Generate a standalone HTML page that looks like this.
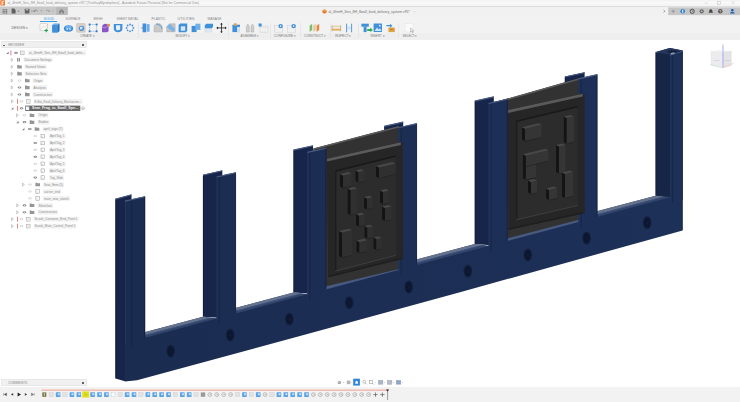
<!DOCTYPE html>
<html>
<head>
<meta charset="utf-8">
<title>Fusion</title>
<style>
html,body{margin:0;padding:0;}
body{width:740px;height:402px;overflow:hidden;background:#fff;position:relative;font-family:"Liberation Sans",sans-serif;}
.abs{position:absolute;}
.t{position:absolute;white-space:nowrap;font-size:3.3px;line-height:4px;color:#6a6a6a;letter-spacing:0;}
#titlebar{left:0;top:0;width:740px;height:5.8px;background:linear-gradient(#f3f3f3 0,#f3f3f3 20%,#fbfbfb 35%,#f6f6f6 60%,#f4f4f4 100%);}
#row2{left:0;top:5.5px;width:740px;height:10px;background:#f1f1f1;border-top:1.3px solid #dddddd;box-sizing:border-box;}
#qat{left:0;top:7px;width:67.5px;height:8px;background:#c9c9c9;}
#ribbon{left:0;top:15.5px;width:740px;height:24.4px;background:linear-gradient(#f2f2f2 0,#f2f2f2 69%,#eeeeee 70%,#efefef 100%);}
#canvas{left:0;top:40px;width:740px;height:362px;}
</style>
</head>
<body>
<div id="titlebar" class="abs"></div>
<div id="row2" class="abs"></div>
<div id="qat" class="abs"></div>
<div id="ribbon" class="abs"></div>

<!-- MODEL -->
<svg id="canvas" class="abs" viewBox="0 40 740 362">
<!--MODEL-START-->
<defs><linearGradient id="gbar" gradientUnits="userSpaceOnUse" x1="115" y1="0" x2="683" y2="0"><stop offset="0" stop-color="#1b2c51"/><stop offset="1" stop-color="#1d3057"/></linearGradient><linearGradient id="gtop" x1="0" y1="0" x2="0" y2="1"><stop offset="0" stop-color="#64748f"/><stop offset="0.5" stop-color="#3c4f76"/><stop offset="1" stop-color="#2a3e66"/></linearGradient></defs>
<polygon points="115.4,198.8 131.5,194.4 131.5,300.0 124.9,381.3 115.4,378.4" fill="#162549" />
<line x1="115.4" y1="199.2" x2="131.5" y2="194.8" stroke="#4a5c82" stroke-width="1.1"/>
<line x1="115.7" y1="199.6" x2="115.7" y2="378.0" stroke="#0e1836" stroke-width="0.6"/>
<polygon points="203.0,174.8 222.3,170.4 222.3,318.0 203.0,316.7" fill="#162549" />
<line x1="203.0" y1="175.2" x2="222.3" y2="170.8" stroke="#4a5c82" stroke-width="1.1"/>
<line x1="203.3" y1="175.6" x2="203.3" y2="316.7" stroke="#0e1836" stroke-width="0.6"/>
<polygon points="293.5,149.7 313.0,145.4 313.0,293.8 293.5,292.5" fill="#162549" />
<line x1="293.5" y1="150.1" x2="313.0" y2="145.8" stroke="#4a5c82" stroke-width="1.1"/>
<line x1="293.8" y1="150.5" x2="293.8" y2="292.5" stroke="#0e1836" stroke-width="0.6"/>
<polygon points="384.3,126.0 403.2,121.7 403.2,269.7 384.3,268.3" fill="#162549" />
<line x1="384.3" y1="126.4" x2="403.2" y2="122.1" stroke="#4a5c82" stroke-width="1.1"/>
<line x1="384.6" y1="126.8" x2="384.6" y2="268.3" stroke="#0e1836" stroke-width="0.6"/>
<polygon points="474.8,100.7 493.8,96.5 493.8,245.5 474.8,244.1" fill="#162549" />
<line x1="474.8" y1="101.1" x2="493.8" y2="96.9" stroke="#4a5c82" stroke-width="1.1"/>
<line x1="475.1" y1="101.5" x2="475.1" y2="244.1" stroke="#0e1836" stroke-width="0.6"/>
<polygon points="564.9,76.6 584.6,72.3 584.6,221.2 564.9,220.0" fill="#162549" />
<line x1="564.9" y1="77.0" x2="584.6" y2="72.7" stroke="#4a5c82" stroke-width="1.1"/>
<line x1="565.2" y1="77.4" x2="565.2" y2="220.0" stroke="#0e1836" stroke-width="0.6"/>
<polygon points="655.6,52.2 670.0,48.1 682.6,50.5 682.6,199.4 670.0,199.4 655.6,195.8" fill="#172646" />
<line x1="655.6" y1="52.6" x2="670.0" y2="48.5" stroke="#4a5c82" stroke-width="1.1"/>
<line x1="655.9" y1="53.0" x2="655.9" y2="195.8" stroke="#0e1836" stroke-width="0.6"/>
<polygon points="144.6,332.2 203.0,316.7 219.1,318.6 219.1,320.1 144.6,338.5" fill="#31446b" />
<polygon points="144.6,332.2 203.0,316.7 210.1,317.7 144.6,335.0" fill="#64728e" />
<polygon points="144.6,335.0 210.1,317.7 211.6,317.9 144.6,335.8" fill="#46587c" />
<polygon points="235.4,307.9 293.5,292.5 309.8,294.3 309.8,295.8 235.4,314.2" fill="#31446b" />
<polygon points="235.4,307.9 293.5,292.5 300.7,293.5 235.4,310.8" fill="#64728e" />
<polygon points="235.4,310.8 300.7,293.5 302.2,293.7 235.4,311.5" fill="#46587c" />
<polygon points="416.4,259.5 474.8,244.1 491.1,245.9 491.1,247.4 416.4,265.8" fill="#31446b" />
<polygon points="416.4,259.5 474.8,244.1 482.0,245.0 416.4,262.4" fill="#64728e" />
<polygon points="416.4,262.4 482.0,245.0 483.5,245.2 416.4,263.2" fill="#46587c" />
<polygon points="596.9,211.3 655.6,195.8 673.5,197.2 673.5,198.7 596.9,217.6" fill="#31446b" />
<polygon points="596.9,211.3 655.6,195.8 663.6,196.5 596.9,214.2" fill="#64728e" />
<polygon points="596.9,214.2 663.6,196.5 665.1,196.7 596.9,214.9" fill="#46587c" />
<polygon points="325.2,281.3 400.0,261.8 400.0,270.6 325.2,290.1" fill="#485a80" />
<polygon points="506.6,232.8 580.0,213.7 580.0,222.5 506.6,241.6" fill="#485a80" />
<polygon points="313.3,148.4 399.0,126.0 399.0,268.9 326.3,286.2" fill="#323232" />
<polygon points="313.3,148.4 399.0,126.0 399.0,127.6 313.3,150.0" fill="#5c5c5c" />
<polygon points="494.6,102.2 579.0,78.2 579.0,219.7 507.6,238.4" fill="#323232" />
<polygon points="494.6,102.2 579.0,78.2 579.0,79.8 494.6,103.8" fill="#5c5c5c" />
<polygon points="124.9,381.4 137.0,380.2 300.0,336.0 460.0,292.2 682.6,230.5 682.6,50.5 670.0,54.6 671.3,197.1 597.4,216.8 597.4,74.2 578.5,78.5 578.5,221.9 507.6,240.8 507.6,98.8 488.6,103.1 488.6,245.9 416.9,265.0 416.9,123.2 398.5,127.4 398.5,270.0 326.2,289.3 326.2,147.8 307.3,152.0 307.3,294.3 235.9,313.4 235.9,172.3 216.6,176.6 216.6,318.6 145.1,337.7 145.1,196.3 124.9,200.7" fill="url(#gbar)" />
<line x1="131.7" y1="199.2" x2="131.7" y2="347.3" stroke="#152341" stroke-width="0.8"/>
<line x1="125.5" y1="201.5" x2="125.5" y2="345.1" stroke="#21365e" stroke-width="1.0"/>
<line x1="219.2" y1="176.0" x2="219.2" y2="323.9" stroke="#152341" stroke-width="0.8"/>
<line x1="217.2" y1="177.4" x2="217.2" y2="320.6" stroke="#21365e" stroke-width="1.0"/>
<line x1="309.9" y1="151.4" x2="309.9" y2="299.6" stroke="#152341" stroke-width="0.8"/>
<line x1="307.9" y1="152.8" x2="307.9" y2="296.3" stroke="#21365e" stroke-width="1.0"/>
<line x1="401.1" y1="126.8" x2="401.1" y2="275.3" stroke="#152341" stroke-width="0.8"/>
<line x1="399.1" y1="128.2" x2="399.1" y2="272.0" stroke="#21365e" stroke-width="1.0"/>
<line x1="491.2" y1="102.5" x2="491.2" y2="251.2" stroke="#152341" stroke-width="0.8"/>
<line x1="489.2" y1="103.9" x2="489.2" y2="247.9" stroke="#21365e" stroke-width="1.0"/>
<line x1="581.1" y1="77.9" x2="581.1" y2="227.2" stroke="#152341" stroke-width="0.8"/>
<line x1="579.1" y1="79.3" x2="579.1" y2="223.9" stroke="#21365e" stroke-width="1.0"/>
<line x1="672.6" y1="53.8" x2="672.6" y2="202.7" stroke="#152341" stroke-width="0.8"/>
<line x1="670.6" y1="55.4" x2="670.6" y2="199.4" stroke="#21365e" stroke-width="1.0"/>
<polygon points="327.0,158.8 400.8,142.2 402.7,142.8 403.1,259.5 401.2,259.3 328.4,277.3" fill="#262626" />
<polygon points="327.0,158.8 400.8,142.2 401.2,259.3 328.4,277.3" fill="#262626" />
<polygon points="327.0,158.8 400.8,142.2 400.8,145.0 327.0,161.6" fill="#5a5a5a" />
<polygon points="328.4,275.7 401.2,257.7 401.2,259.3 328.4,277.3" fill="#1f1f1f" />
<polygon points="335.0,170.3 395.7,155.3 396.0,255.3 335.0,271.2" fill="#2c2c2c" />
<polygon points="335.0,170.3 395.7,155.3 395.7,157.0 335.0,172.0" fill="#1a1a1a" />
<polygon points="335.0,170.3 336.4,170.3 336.4,271.2 335.0,271.2" fill="#1d1d1d" />
<line x1="335.0" y1="271.2" x2="396.0" y2="255.3" stroke="#484848" stroke-width="0.7"/>
<polygon points="508.1,110.1 582.7,93.7 584.6,94.3 584.8,213.7 582.9,213.5 508.8,229.8" fill="#262626" />
<polygon points="508.1,110.1 582.7,93.7 582.9,213.5 508.8,229.8" fill="#262626" />
<polygon points="508.1,110.1 582.7,93.7 582.7,96.5 508.1,112.9" fill="#5a5a5a" />
<polygon points="508.8,228.2 582.9,211.9 582.9,213.5 508.8,229.8" fill="#1f1f1f" />
<polygon points="516.0,120.5 577.7,105.7 577.7,205.5 516.0,219.9" fill="#2c2c2c" />
<polygon points="516.0,120.5 577.7,105.7 577.7,107.4 516.0,122.2" fill="#1a1a1a" />
<polygon points="516.0,120.5 517.4,120.5 517.4,219.9 516.0,219.9" fill="#1d1d1d" />
<line x1="516.0" y1="219.9" x2="577.7" y2="205.5" stroke="#484848" stroke-width="0.7"/>
<polygon points="340.0,174.1 343.0,175.5 343.0,188.0 340.0,186.6" fill="#141414" />
<polygon points="343.0,175.5 351.5,173.4 351.5,185.9 343.0,188.0" fill="#303030" />
<polygon points="340.0,174.1 348.5,172.0 351.5,173.4 343.0,175.5" fill="#484848" />
<polygon points="343.0,188.0 351.5,185.9 351.5,186.6 343.0,188.7" fill="#232323" />
<polygon points="355.5,170.6 358.5,172.0 358.5,182.5 355.5,181.1" fill="#141414" />
<polygon points="358.5,172.0 364.0,170.7 364.0,181.2 358.5,182.5" fill="#303030" />
<polygon points="355.5,170.6 361.0,169.3 364.0,170.7 358.5,172.0" fill="#484848" />
<polygon points="358.5,182.5 364.0,181.2 364.0,181.9 358.5,183.2" fill="#232323" />
<polygon points="376.0,166.1 379.0,167.5 379.0,178.0 376.0,176.6" fill="#141414" />
<polygon points="379.0,167.5 395.5,163.5 395.5,174.0 379.0,178.0" fill="#303030" />
<polygon points="376.0,166.1 392.5,162.1 395.5,163.5 379.0,167.5" fill="#484848" />
<polygon points="379.0,178.0 395.5,174.0 395.5,174.7 379.0,178.7" fill="#232323" />
<polygon points="347.7,188.6 350.7,190.0 350.7,215.0 347.7,213.6" fill="#141414" />
<polygon points="350.7,190.0 357.0,188.5 357.0,213.5 350.7,215.0" fill="#303030" />
<polygon points="347.7,188.6 354.0,187.1 357.0,188.5 350.7,190.0" fill="#484848" />
<polygon points="350.7,215.0 357.0,213.5 357.0,214.2 350.7,215.7" fill="#232323" />
<polygon points="364.0,197.1 367.0,198.5 367.0,209.5 364.0,208.1" fill="#141414" />
<polygon points="367.0,198.5 372.5,197.2 372.5,208.2 367.0,209.5" fill="#303030" />
<polygon points="364.0,197.1 369.5,195.8 372.5,197.2 367.0,198.5" fill="#484848" />
<polygon points="367.0,209.5 372.5,208.2 372.5,208.9 367.0,210.2" fill="#232323" />
<polygon points="380.0,190.6 383.0,192.0 383.0,204.0 380.0,202.6" fill="#141414" />
<polygon points="383.0,192.0 389.0,190.5 389.0,202.5 383.0,204.0" fill="#303030" />
<polygon points="380.0,190.6 386.0,189.1 389.0,190.5 383.0,192.0" fill="#484848" />
<polygon points="383.0,204.0 389.0,202.5 389.0,203.2 383.0,204.7" fill="#232323" />
<polygon points="382.0,206.6 385.0,208.0 385.0,221.0 382.0,219.6" fill="#141414" />
<polygon points="385.0,208.0 391.5,206.4 391.5,219.4 385.0,221.0" fill="#303030" />
<polygon points="382.0,206.6 388.5,205.0 391.5,206.4 385.0,208.0" fill="#484848" />
<polygon points="385.0,221.0 391.5,219.4 391.5,220.1 385.0,221.7" fill="#232323" />
<polygon points="356.0,214.1 359.0,215.5 359.0,226.5 356.0,225.1" fill="#141414" />
<polygon points="359.0,215.5 364.5,214.2 364.5,225.2 359.0,226.5" fill="#303030" />
<polygon points="356.0,214.1 361.5,212.8 364.5,214.2 359.0,215.5" fill="#484848" />
<polygon points="359.0,226.5 364.5,225.2 364.5,225.9 359.0,227.2" fill="#232323" />
<polygon points="339.0,231.1 342.0,232.5 342.0,257.5 339.0,256.1" fill="#141414" />
<polygon points="342.0,232.5 352.0,230.1 352.0,255.1 342.0,257.5" fill="#303030" />
<polygon points="339.0,231.1 349.0,228.7 352.0,230.1 342.0,232.5" fill="#484848" />
<polygon points="342.0,257.5 352.0,255.1 352.0,255.8 342.0,258.2" fill="#232323" />
<polygon points="356.5,240.6 359.5,242.0 359.5,253.0 356.5,251.6" fill="#141414" />
<polygon points="359.5,242.0 367.0,240.2 367.0,251.2 359.5,253.0" fill="#303030" />
<polygon points="356.5,240.6 364.0,238.8 367.0,240.2 359.5,242.0" fill="#484848" />
<polygon points="359.5,253.0 367.0,251.2 367.0,251.9 359.5,253.7" fill="#232323" />
<polygon points="364.5,226.1 367.5,227.5 367.5,238.5 364.5,237.1" fill="#141414" />
<polygon points="367.5,227.5 373.0,226.2 373.0,237.2 367.5,238.5" fill="#303030" />
<polygon points="364.5,226.1 370.0,224.8 373.0,226.2 367.5,227.5" fill="#484848" />
<polygon points="367.5,238.5 373.0,237.2 373.0,237.9 367.5,239.2" fill="#232323" />
<polygon points="373.5,237.6 376.5,239.0 376.5,250.0 373.5,248.6" fill="#141414" />
<polygon points="376.5,239.0 381.5,237.8 381.5,248.8 376.5,250.0" fill="#303030" />
<polygon points="373.5,237.6 378.5,236.4 381.5,237.8 376.5,239.0" fill="#484848" />
<polygon points="376.5,250.0 381.5,248.8 381.5,249.5 376.5,250.7" fill="#232323" />
<polygon points="522.0,127.3 525.0,128.7 525.0,141.0 522.0,139.6" fill="#141414" />
<polygon points="525.0,128.7 541.6,124.6 541.6,136.9 525.0,141.0" fill="#353535" />
<polygon points="522.0,127.3 538.6,123.2 541.6,124.6 525.0,128.7" fill="#484848" />
<polygon points="525.0,141.0 541.6,136.9 541.6,137.6 525.0,141.7" fill="#232323" />
<polygon points="563.8,116.6 566.8,118.0 566.8,143.5 563.8,142.1" fill="#141414" />
<polygon points="566.8,118.0 573.8,116.3 573.8,141.8 566.8,143.5" fill="#353535" />
<polygon points="563.8,116.6 570.8,114.9 573.8,116.3 566.8,118.0" fill="#484848" />
<polygon points="566.8,143.5 573.8,141.8 573.8,142.5 566.8,144.2" fill="#232323" />
<polygon points="522.9,163.8 525.9,165.2 525.9,179.7 522.9,178.3" fill="#141414" />
<polygon points="525.9,165.2 536.0,162.7 536.0,177.2 525.9,179.7" fill="#353535" />
<polygon points="522.9,163.8 533.0,161.3 536.0,162.7 525.9,165.2" fill="#484848" />
<polygon points="525.9,179.7 536.0,177.2 536.0,177.9 525.9,180.4" fill="#232323" />
<polygon points="522.9,154.3 525.9,155.7 525.9,166.2 522.9,164.8" fill="#141414" />
<polygon points="525.9,155.7 548.5,150.2 548.5,160.7 525.9,166.2" fill="#353535" />
<polygon points="522.9,154.3 545.5,148.8 548.5,150.2 525.9,155.7" fill="#484848" />
<polygon points="525.9,166.2 548.5,160.7 548.5,161.4 525.9,166.9" fill="#232323" />
<polygon points="556.0,145.1 559.0,146.5 559.0,173.5 556.0,172.1" fill="#141414" />
<polygon points="559.0,146.5 565.5,144.9 565.5,171.9 559.0,173.5" fill="#353535" />
<polygon points="556.0,145.1 562.5,143.5 565.5,144.9 559.0,146.5" fill="#484848" />
<polygon points="559.0,173.5 565.5,171.9 565.5,172.6 559.0,174.2" fill="#232323" />
<polygon points="528.0,180.6 531.0,182.0 531.0,194.0 528.0,192.6" fill="#141414" />
<polygon points="531.0,182.0 537.0,180.5 537.0,192.5 531.0,194.0" fill="#353535" />
<polygon points="528.0,180.6 534.0,179.1 537.0,180.5 531.0,182.0" fill="#484848" />
<polygon points="531.0,194.0 537.0,192.5 537.0,193.2 531.0,194.7" fill="#232323" />
<polygon points="546.0,188.6 549.0,190.0 549.0,200.0 546.0,198.6" fill="#141414" />
<polygon points="549.0,190.0 557.0,188.0 557.0,198.0 549.0,200.0" fill="#353535" />
<polygon points="546.0,188.6 554.0,186.6 557.0,188.0 549.0,190.0" fill="#484848" />
<polygon points="549.0,200.0 557.0,198.0 557.0,198.7 549.0,200.7" fill="#232323" />
<polygon points="562.0,172.6 565.0,174.0 565.0,198.0 562.0,196.6" fill="#141414" />
<polygon points="565.0,174.0 573.0,172.0 573.0,196.0 565.0,198.0" fill="#353535" />
<polygon points="562.0,172.6 570.0,170.6 573.0,172.0 565.0,174.0" fill="#484848" />
<polygon points="565.0,198.0 573.0,196.0 573.0,196.7 565.0,198.7" fill="#232323" />
<line x1="124.9" y1="201.1" x2="145.1" y2="196.7" stroke="#4a5c82" stroke-width="1.1"/>
<line x1="144.8" y1="197.1" x2="144.8" y2="337.7" stroke="#0e1836" stroke-width="0.6"/>
<line x1="216.6" y1="177.0" x2="235.9" y2="172.7" stroke="#4a5c82" stroke-width="1.1"/>
<line x1="235.6" y1="173.1" x2="235.6" y2="313.4" stroke="#0e1836" stroke-width="0.6"/>
<line x1="307.3" y1="152.4" x2="326.2" y2="148.2" stroke="#4a5c82" stroke-width="1.1"/>
<line x1="325.9" y1="148.6" x2="325.9" y2="289.3" stroke="#0e1836" stroke-width="0.6"/>
<line x1="398.5" y1="127.8" x2="416.9" y2="123.6" stroke="#4a5c82" stroke-width="1.1"/>
<line x1="416.6" y1="124.0" x2="416.6" y2="265.0" stroke="#0e1836" stroke-width="0.6"/>
<line x1="488.6" y1="103.5" x2="507.6" y2="99.2" stroke="#4a5c82" stroke-width="1.1"/>
<line x1="507.3" y1="99.6" x2="507.3" y2="240.8" stroke="#0e1836" stroke-width="0.6"/>
<line x1="578.5" y1="78.9" x2="597.4" y2="74.6" stroke="#4a5c82" stroke-width="1.1"/>
<line x1="597.1" y1="75.0" x2="597.1" y2="216.8" stroke="#0e1836" stroke-width="0.6"/>
<line x1="670.0" y1="55.0" x2="682.6" y2="50.9" stroke="#4a5c82" stroke-width="1.1"/>
<line x1="682.3" y1="51.3" x2="682.3" y2="230.0" stroke="#0e1836" stroke-width="0.6"/>
<polygon points="655.6,52.2 670.0,48.1 682.6,50.5 670.0,54.6" fill="#26375c" />
<polygon points="666.0,51.6 672.0,50.0 680.5,51.2 675.0,52.9 672.0,52.5 670.5,53.6" fill="#15223f" />
<polygon points="670.8,53.0 674.5,52.2 674.5,54.0 670.8,54.8" fill="#8794ad" />
<ellipse cx="170.7" cy="351.1" rx="4.3" ry="6.4" fill="#142142"/>
<ellipse cx="170.7" cy="351.1" rx="3.5" ry="5.5" fill="#0f1a35"/>
<ellipse cx="170.5" cy="351.1" rx="2.4" ry="4.2" fill="#0d162f"/>
<ellipse cx="171.0" cy="351.4" rx="0.9" ry="1.8" fill="#111c38"/>
<ellipse cx="230.2" cy="335.0" rx="4.3" ry="6.4" fill="#142142"/>
<ellipse cx="230.2" cy="335.0" rx="3.5" ry="5.5" fill="#0f1a35"/>
<ellipse cx="230.0" cy="335.0" rx="2.4" ry="4.2" fill="#0d162f"/>
<ellipse cx="230.5" cy="335.3" rx="0.9" ry="1.8" fill="#111c38"/>
<ellipse cx="289.4" cy="319.1" rx="4.3" ry="6.4" fill="#142142"/>
<ellipse cx="289.4" cy="319.1" rx="3.5" ry="5.5" fill="#0f1a35"/>
<ellipse cx="289.2" cy="319.1" rx="2.4" ry="4.2" fill="#0d162f"/>
<ellipse cx="289.7" cy="319.4" rx="0.9" ry="1.8" fill="#111c38"/>
<ellipse cx="349.2" cy="302.6" rx="4.3" ry="6.4" fill="#142142"/>
<ellipse cx="349.2" cy="302.6" rx="3.5" ry="5.5" fill="#0f1a35"/>
<ellipse cx="349.0" cy="302.6" rx="2.4" ry="4.2" fill="#0d162f"/>
<ellipse cx="349.5" cy="302.9" rx="0.9" ry="1.8" fill="#111c38"/>
<ellipse cx="408.7" cy="287.0" rx="4.3" ry="6.4" fill="#142142"/>
<ellipse cx="408.7" cy="287.0" rx="3.5" ry="5.5" fill="#0f1a35"/>
<ellipse cx="408.5" cy="287.0" rx="2.4" ry="4.2" fill="#0d162f"/>
<ellipse cx="409.0" cy="287.3" rx="0.9" ry="1.8" fill="#111c38"/>
<ellipse cx="467.9" cy="271.1" rx="4.3" ry="6.4" fill="#142142"/>
<ellipse cx="467.9" cy="271.1" rx="3.5" ry="5.5" fill="#0f1a35"/>
<ellipse cx="467.7" cy="271.1" rx="2.4" ry="4.2" fill="#0d162f"/>
<ellipse cx="468.2" cy="271.4" rx="0.9" ry="1.8" fill="#111c38"/>
<ellipse cx="527.8" cy="254.9" rx="4.3" ry="6.4" fill="#142142"/>
<ellipse cx="527.8" cy="254.9" rx="3.5" ry="5.5" fill="#0f1a35"/>
<ellipse cx="527.6" cy="254.9" rx="2.4" ry="4.2" fill="#0d162f"/>
<ellipse cx="528.1" cy="255.2" rx="0.9" ry="1.8" fill="#111c38"/>
<ellipse cx="586.6" cy="238.1" rx="4.3" ry="6.4" fill="#142142"/>
<ellipse cx="586.6" cy="238.1" rx="3.5" ry="5.5" fill="#0f1a35"/>
<ellipse cx="586.4" cy="238.1" rx="2.4" ry="4.2" fill="#0d162f"/>
<ellipse cx="586.9" cy="238.4" rx="0.9" ry="1.8" fill="#111c38"/>
<ellipse cx="647.2" cy="222.6" rx="4.3" ry="6.4" fill="#142142"/>
<ellipse cx="647.2" cy="222.6" rx="3.5" ry="5.5" fill="#0f1a35"/>
<ellipse cx="647.0" cy="222.6" rx="2.4" ry="4.2" fill="#0d162f"/>
<ellipse cx="647.5" cy="222.9" rx="0.9" ry="1.8" fill="#111c38"/>
<!--MODEL-END-->
</svg>

<!--UI-START-->
<svg class="abs" style="left:0;top:0" width="6" height="6" viewBox="0 0 6 6"><rect x="0.3" y="0.2" width="4.6" height="5.2" rx="0.6" fill="#f26a1b"/><path d="M1.6 1.3h2.2v0.9h-1.2v0.8h1v0.8h-1v1.2h-1z" fill="#fff"/></svg>
<svg class="abs" style="left:700px;top:0" width="40" height="6" viewBox="0 0 40 6"><path d="M4.5 3h3.5" stroke="#c8c8c8" stroke-width="0.5"/><rect x="17.6" y="1.2" width="3" height="3" fill="none" stroke="#bdbdbd" stroke-width="0.5"/><path d="M31.5 1.2l3 3M34.5 1.2l-3 3" stroke="#c4c4c4" stroke-width="0.5"/></svg>
<svg class="abs" style="left:0;top:7px" width="68" height="8" viewBox="0 0 68 8"><rect x="56" y="0.2" width="11.5" height="7.8" fill="#bababa"/><rect x="2.6" y="2.2" width="1.2" height="1.1" fill="#6c6c6c"/><rect x="2.6" y="3.8" width="1.2" height="1.1" fill="#6c6c6c"/><rect x="2.6" y="5.4" width="1.2" height="1.1" fill="#6c6c6c"/><rect x="4.3" y="2.2" width="1.2" height="1.1" fill="#6c6c6c"/><rect x="4.3" y="3.8" width="1.2" height="1.1" fill="#6c6c6c"/><rect x="4.3" y="5.4" width="1.2" height="1.1" fill="#6c6c6c"/><rect x="6.0" y="2.2" width="1.2" height="1.1" fill="#6c6c6c"/><rect x="6.0" y="3.8" width="1.2" height="1.1" fill="#6c6c6c"/><rect x="6.0" y="5.4" width="1.2" height="1.1" fill="#6c6c6c"/><path d="M11.6 1.6h2.6l1.4 1.4v3.6h-4z" fill="#606060"/><path d="M17.5 3.8l1 1 1-1z" fill="#666"/><rect x="24.8" y="1.8" width="4.6" height="4.6" rx="0.4" fill="#646464"/><rect x="25.8" y="1.8" width="2.4" height="1.5" fill="#bbb"/><path d="M31 3.8l0.9 0.9 0.9-0.9z" fill="#777"/><path d="M34 4.6c0.6-1.8 2.6-2 3.6-0.6" fill="none" stroke="#7a7a7a" stroke-width="0.8"/><path d="M33.4 3.2l0.4 1.9 1.8-0.6z" fill="#7a7a7a"/><path d="M40.5 3.6l0.8 0.8 0.8-0.8z" fill="#777"/><path d="M49.6 4.6c-0.6-1.8-2.6-2-3.6-0.6" fill="none" stroke="#999" stroke-width="0.8"/><path d="M50.2 3.2l-0.4 1.9-1.8-0.6z" fill="#999"/><path d="M52.3 3.6l0.8 0.8 0.8-0.8z" fill="#999"/><path d="M59 4.2l2.5-2.2 2.5 2.2v2.4h-5z" fill="#858585"/><rect x="60.8" y="4.8" width="1.4" height="1.8" fill="#bababa"/></svg>
<svg class="abs" style="left:321.7px;top:9.4px" width="5" height="5" viewBox="0 0 5 5"><path d="M2.5 0.3l2.1 1.1v2.2l-2.1 1.1-2.1-1.1v-2.2z" fill="#e8792a"/><path d="M2.5 0.3l2.1 1.1-2.1 1.1-2.1-1.1z" fill="#f5a25a"/></svg>
<svg class="abs" style="left:660px;top:7px" width="80" height="8.5" viewBox="0 0 80 8.5"><rect x="8.2" y="0.4" width="72" height="7.7" fill="#c6c6c6"/><path d="M3.6 3l1.2 1.2-1.2 1.2" fill="none" stroke="#555" stroke-width="0.6"/><path d="M11.5 4.3h3.4M13.2 2.6v3.4" stroke="#8a8a8a" stroke-width="0.7"/><circle cx="22.7" cy="4.3" r="2.3" fill="#2b7fd3"/><rect x="22.2" y="2.8" width="1" height="3" fill="#fff"/><circle cx="32.2" cy="4.3" r="2.1" fill="none" stroke="#444" stroke-width="0.9"/><path d="M32.2 3.1v1.3h1" stroke="#444" stroke-width="0.5" fill="none"/><circle cx="41.7" cy="4.3" r="2.1" fill="#666"/><circle cx="41.7" cy="4.3" r="0.9" fill="#c4c4c4"/><path d="M50.8 2.2c1.3 0 1.6 1 1.6 2.4l0.6 1.2h-4.4l0.6-1.2c0-1.4 0.3-2.4 1.6-2.4z" fill="#444"/><circle cx="60.3" cy="4.3" r="2.2" fill="#555"/><text x="60.3" y="5.5" font-size="3.4" fill="#ddd" text-anchor="middle" font-family="Liberation Sans" font-weight="bold">?</text><circle cx="72.3" cy="4.3" r="3.1" fill="#b4c4d8"/><circle cx="72.3" cy="3.2" r="1.3" fill="#2a5d9c"/><path d="M69.9 6.6c0.3-2 4.5-2 4.8 0z" fill="#2a5d9c"/></svg>
<div class="abs" style="left:40px;top:20.6px;width:16.5px;height:0.7px;background:#3a97e0;"></div>
<div class="abs" style="left:137.6px;top:22.5px;width:0.5px;height:15px;background:#e6e6e6;"></div>
<div class="abs" style="left:228.3px;top:22.5px;width:0.5px;height:15px;background:#e6e6e6;"></div>
<div class="abs" style="left:269.5px;top:22.5px;width:0.5px;height:15px;background:#e6e6e6;"></div>
<div class="abs" style="left:300.0px;top:22.5px;width:0.5px;height:15px;background:#e6e6e6;"></div>
<div class="abs" style="left:329.5px;top:22.5px;width:0.5px;height:15px;background:#e6e6e6;"></div>
<div class="abs" style="left:357.5px;top:22.5px;width:0.5px;height:15px;background:#e6e6e6;"></div>
<div class="abs" style="left:397.5px;top:22.5px;width:0.5px;height:15px;background:#e6e6e6;"></div>
<svg class="abs" style="left:0;top:21.5px" width="430" height="12" viewBox="0 21.5 430 12"><rect x="40" y="23.3" width="7.6" height="7" fill="#fbfbfb" stroke="#bbb" stroke-width="0.5"/><path d="M41 29l2.5-3.5 2 1.5 2-3" fill="none" stroke="#c55" stroke-width="0.4" stroke-dasharray="0.8 0.6"/><path d="M46.2 28.2v3.6M44.4 30h3.6" stroke="#17a84b" stroke-width="1.1"/><path d="M52.2 24.6l1.6-1.6h5.6v7.4l-1.6 1.6h-5.6z" fill="#6fb0ea"/><path d="M52.2 24.6h5.6v7.4h-5.6z" fill="#3f8fd9"/><path d="M57.8 24.6l1.6-1.6v7.4l-1.6 1.6z" fill="#2a6fb8"/><ellipse cx="68.5" cy="28" rx="4.6" ry="3.3" fill="#3f8fd9"/><ellipse cx="68.5" cy="26.6" rx="3.2" ry="1.6" fill="#6fb0ea"/><rect x="66.6" y="27.6" width="1.2" height="2" fill="#e8f2fb"/><rect x="69.4" y="27.6" width="1.2" height="2" fill="#e8f2fb"/><rect x="76.6" y="23" width="8.6" height="8.8" rx="0.8" fill="#d9cfc4" stroke="#b9ada0" stroke-width="0.4"/><circle cx="81.5" cy="27.8" r="2.6" fill="#3f8fd9"/><circle cx="81.2" cy="27.4" r="1.5" fill="#cfe3f6"/><rect x="89.6" y="24" width="7" height="6.8" fill="none" stroke="#3f8fd9" stroke-width="0.6" stroke-dasharray="1.1 0.9"/><rect x="88.7" y="23.1" width="1.8" height="1.8" fill="#2a6fb8"/><rect x="95.7" y="23.1" width="1.8" height="1.8" fill="#2a6fb8"/><rect x="88.7" y="29.9" width="1.8" height="1.8" fill="#2a6fb8"/><rect x="95.7" y="29.9" width="1.8" height="1.8" fill="#2a6fb8"/><path d="M102 26.5c0-2 1.4-3.3 3.6-3.3l3 1v6.6l-1.6 1h-5z" fill="#8a55c9"/><path d="M102 26.5l3.2 0.8 3.4-2.6" fill="none" stroke="#c9a6ee" stroke-width="0.7"/><rect x="107.6" y="23.4" width="2.4" height="2.4" fill="#e39a3c"/><path d="M113.8 23.4h8.6v5.2c0 2-1.8 3.2-4.3 3.2s-4.3-1.2-4.3-3.2z" fill="#3f8fd9"/><path d="M116 24.8h4.2v3.4c0 1-1 1.6-2.1 1.6s-2.1-0.6-2.1-1.6z" fill="#e6f0fa"/><circle cx="133.4" cy="27.4" r="0.9" fill="#3f8fd9"/><circle cx="132.4" cy="29.8" r="0.9" fill="#3f8fd9"/><circle cx="130.0" cy="30.8" r="0.9" fill="#3f8fd9"/><circle cx="127.6" cy="29.8" r="0.9" fill="#3f8fd9"/><circle cx="126.6" cy="27.4" r="0.9" fill="#3f8fd9"/><circle cx="127.6" cy="25.0" r="0.9" fill="#3f8fd9"/><circle cx="130.0" cy="24.0" r="0.9" fill="#3f8fd9"/><circle cx="132.4" cy="25.0" r="0.9" fill="#3f8fd9"/><rect x="142.6" y="23" width="3.6" height="8.8" fill="#3f8fd9"/><rect x="146.6" y="23.6" width="3" height="7.6" fill="#6fb0ea"/><path d="M141.2 27.4h2" stroke="#444" stroke-width="0.5"/><path d="M154 31.6v-5.2c0-2 1.6-3.4 4-3.4s4.4 1.6 4.4 4.2v4.4z" fill="#c9c9c9" stroke="#aaa" stroke-width="0.4"/><path d="M156.4 23.6c2.6 0 5 1.8 5.4 4.6" fill="none" stroke="#3f8fd9" stroke-width="0.8"/><path d="M166.6 31.4v-5l3-3.2h5.6v8.2z" fill="#c4c4c4" stroke="#aaa" stroke-width="0.4"/><path d="M166.6 26.4l3-3.2 5.6 5.4-2 2.8z" fill="#6fb0ea" opacity="0.85"/><path d="M178.6 24.4l1.6-1.4h7v7.4l-1.6 1.4h-7z" fill="#3f8fd9"/><rect x="180.8" y="25.8" width="4.4" height="4.4" fill="#d7e8f8"/><rect x="191.6" y="25.4" width="5" height="6.2" fill="#3f8fd9"/><rect x="195.4" y="23.2" width="5" height="6.2" fill="#6fb0ea"/><path d="M204.8 25l1.4-1.8h6.8v3l-1.4 1.8h-6.8z" fill="#3f8fd9"/><path d="M204.8 28.2h6.8v3.4h-6.8z" fill="#dfe9f3" stroke="#b8c7d6" stroke-width="0.3"/><path d="M221.5 23v8.8M217.1 27.4h8.8" stroke="#222" stroke-width="0.8"/><path d="M221.5 22.2l1.3 1.7h-2.6zM221.5 32.6l1.3-1.7h-2.6zM216.3 27.4l1.7-1.3v2.6zM226.7 27.4l-1.7-1.3v2.6z" fill="#222"/><rect x="232.4" y="24.2" width="7.6" height="7.4" fill="#3f8fd9"/><rect x="234" y="22.8" width="2.6" height="2.6" fill="#e3a24a"/><rect x="237" y="26.4" width="3" height="5.2" fill="#cfe0f0"/><path d="M246.4 31.6v-5.6l1.4-2.6 1.4 2.6v5.6zM251 31.6v-5.6l1.4-2.6 1.4 2.6v5.6z" fill="#cfcfcf" stroke="#9a9a9a" stroke-width="0.4"/><rect x="260" y="25.6" width="8" height="6" fill="#f6f6f6" stroke="#bdbdbd" stroke-width="0.4"/><path d="M260 27.6h8M262.6 25.6v6M265.3 25.6v6" stroke="#cfcfcf" stroke-width="0.3"/><rect x="258.6" y="23" width="3" height="3" fill="#3f8fd9"/><rect x="274.2" y="25" width="8.6" height="6.6" fill="#f4f4f4" stroke="#c2c2c2" stroke-width="0.4"/><path d="M274.2 27.2h8.6M274.2 29.4h8.6" stroke="#d5d5d5" stroke-width="0.3"/><circle cx="280.6" cy="25.6" r="2.2" fill="#3f8fd9"/><circle cx="280.6" cy="25.6" r="0.8" fill="#fff"/><rect x="287.2" y="25" width="8.6" height="6.6" fill="#f4f4f4" stroke="#c2c2c2" stroke-width="0.4"/><path d="M287.2 27.2h8.6M287.2 29.4h8.6" stroke="#d5d5d5" stroke-width="0.3"/><circle cx="293.6" cy="25.6" r="2.2" fill="#3f8fd9"/><circle cx="293.6" cy="25.6" r="0.8" fill="#fff"/><path d="M309.6 31.6v-6.4l2.6-2v6.4z" fill="#7bbf6a"/><path d="M313.2 31.6v-6.4l2.6-2v6.4z" fill="#e7c9a0"/><path d="M316.6 31.6v-6.4l2.6-2v6.4z" fill="#e58a3a"/><path d="M332 25.6h8.6v4.4h-8.6z" fill="#f0ead8" stroke="#d6a64a" stroke-width="0.5"/><path d="M332 28.8h8.6" stroke="#e39a3c" stroke-width="0.9"/><path d="M332 24.4v6.6M340.6 24.4v6.6" stroke="#999" stroke-width="0.4"/><path d="M346.6 23.2v8.6M351.6 23.2v8.6" stroke="#3f8fd9" stroke-width="0.9"/><path d="M346.6 25.4l5 4M346.6 29.4l5-4" stroke="#9cc4ea" stroke-width="0.5"/><rect x="361.4" y="23.2" width="7.4" height="3" fill="#3f8fd9"/><rect x="363.6" y="26.2" width="3" height="5.4" fill="#3f8fd9"/><path d="M367.2 28.4h3.2v-1.4l2.4 2.4-2.4 2.4v-1.4h-3.2z" fill="#2fae5a"/><rect x="373.6" y="23" width="8.4" height="8.6" rx="0.6" fill="#3f8fd9"/><path d="M374.6 30.4l2.4-3.4 1.8 2 1.2-1.2 1.6 2.6z" fill="#cfe6fa"/><circle cx="379.8" cy="25.2" r="0.9" fill="#e8f3fc"/><rect x="388.4" y="27" width="6.4" height="4.6" fill="#e3a24a"/><path d="M386.4 24.6h3.6v-1.4l2.4 2-2.4 2v-1.4h-3.6z" fill="#3f8fd9"/><rect x="390" y="28.4" width="3.2" height="1" fill="#b87a28"/><rect x="405.2" y="23" width="7.8" height="8.4" fill="#fafafa" stroke="#d0d0d0" stroke-width="0.4" stroke-dasharray="0.9 0.7"/><path d="M410.6 27.6l0 4 1-1 0.8 1.6 0.7-0.3-0.8-1.6h1.4z" fill="#fff" stroke="#777" stroke-width="0.4"/></svg>
<div class="abs" style="left:1.3px;top:41.4px;width:86px;height:6.4px;background:#f0f0f0;border:0.4px solid #e8e8e8;box-sizing:border-box;"></div>
<div class="abs" style="left:3.2px;top:44.5px;width:2px;height:0.6px;background:#666;"></div>
<div class="abs" style="left:82.1px;top:43.9px;width:2px;height:2px;border-radius:1px;background:#333;"></div>
<svg class="abs" style="left:0;top:48px" width="90" height="182" viewBox="0 48 90 182"><path d="M8.6 54.0l-2.2 0 2.2-2.2z" fill="#707070"/><rect x="10.6" y="50.4" width="0.7" height="5" fill="#c44a9a"/><ellipse cx="16.0" cy="52.9" rx="1.9" ry="1.1" fill="#8a8a8a"/><circle cx="16.0" cy="52.9" r="0.5" fill="#fff"/><rect x="20.5" y="51.0" width="3.6" height="3.8" fill="#f8f8f8" stroke="#999" stroke-width="0.45"/><path d="M21.3 52.4h2M21.3 53.5h2" stroke="#bbb" stroke-width="0.3"/><path d="M11.2 58.3l1.9 1.5-1.9 1.5z" fill="none" stroke="#999" stroke-width="0.5"/><rect x="17.2" y="58.1" width="1" height="3.4" fill="#777"/><rect x="18.8" y="58.1" width="1" height="3.4" fill="#777"/><path d="M11.2 65.3l1.9 1.5-1.9 1.5z" fill="none" stroke="#999" stroke-width="0.5"/><path d="M17.2 64.9h1.6l0.5 0.5h2.5v3.1h-4.6z" fill="#959595"/><path d="M11.2 72.2l1.9 1.5-1.9 1.5z" fill="none" stroke="#999" stroke-width="0.5"/><path d="M17.2 71.8h1.6l0.5 0.5h2.5v3.1h-4.6z" fill="#959595"/><path d="M11.2 79.1l1.9 1.5-1.9 1.5z" fill="none" stroke="#999" stroke-width="0.5"/><ellipse cx="19.5" cy="80.6" rx="1.9" ry="1.1" fill="#d8d8d8"/><circle cx="19.5" cy="80.6" r="0.5" fill="#fff"/><path d="M25.0 78.7h1.6l0.5 0.5h2.5v3.1h-4.6z" fill="#959595"/><path d="M11.2 86.0l1.9 1.5-1.9 1.5z" fill="none" stroke="#999" stroke-width="0.5"/><ellipse cx="19.5" cy="87.5" rx="1.9" ry="1.1" fill="#8a8a8a"/><circle cx="19.5" cy="87.5" r="0.5" fill="#fff"/><path d="M25.0 85.6h1.6l0.5 0.5h2.5v3.1h-4.6z" fill="#959595"/><path d="M11.2 93.0l1.9 1.5-1.9 1.5z" fill="none" stroke="#999" stroke-width="0.5"/><ellipse cx="19.5" cy="94.5" rx="1.9" ry="1.1" fill="#8a8a8a"/><circle cx="19.5" cy="94.5" r="0.5" fill="#fff"/><path d="M25.0 92.6h1.6l0.5 0.5h2.5v3.1h-4.6z" fill="#959595"/><path d="M11.5 99.9l1.9 1.5-1.9 1.5z" fill="none" stroke="#999" stroke-width="0.5"/><rect x="17" y="98.9" width="0.7" height="5" fill="#e05555"/><ellipse cx="21.5" cy="101.4" rx="1.9" ry="1.1" fill="#d8d8d8"/><circle cx="21.5" cy="101.4" r="0.5" fill="#fff"/><rect x="26.5" y="99.5" width="3.6" height="3.8" fill="#f8f8f8" stroke="#999" stroke-width="0.45"/><path d="M27.3 100.9h2M27.3 102.0h2" stroke="#bbb" stroke-width="0.3"/><path d="M13.4 109.4l-2.2 0 2.2-2.2z" fill="#707070"/><rect x="17" y="105.8" width="0.7" height="5" fill="#e05555"/><ellipse cx="21.5" cy="108.3" rx="1.9" ry="1.1" fill="#8a8a8a"/><circle cx="21.5" cy="108.3" r="0.5" fill="#fff"/><circle cx="83" cy="108.3" r="1.5" fill="none" stroke="#999" stroke-width="0.5"/><circle cx="83" cy="108.3" r="0.6" fill="#999"/><path d="M16.5 113.8l1.9 1.5-1.9 1.5z" fill="none" stroke="#999" stroke-width="0.5"/><ellipse cx="24.5" cy="115.3" rx="1.9" ry="1.1" fill="#d8d8d8"/><circle cx="24.5" cy="115.3" r="0.5" fill="#fff"/><path d="M29.7 113.4h1.6l0.5 0.5h2.5v3.1h-4.6z" fill="#959595"/><path d="M18.6 123.3l-2.2 0 2.2-2.2z" fill="#707070"/><ellipse cx="24.5" cy="122.2" rx="1.9" ry="1.1" fill="#8a8a8a"/><circle cx="24.5" cy="122.2" r="0.5" fill="#fff"/><path d="M29.7 120.3h1.6l0.5 0.5h2.5v3.1h-4.6z" fill="#959595"/><path d="M24.4 130.2l-2.2 0 2.2-2.2z" fill="#707070"/><ellipse cx="29.8" cy="129.1" rx="1.9" ry="1.1" fill="#8a8a8a"/><circle cx="29.8" cy="129.1" r="0.5" fill="#fff"/><path d="M34.7 127.2h1.6l0.5 0.5h2.5v3.1h-4.6z" fill="#959595"/><ellipse cx="35.3" cy="136.1" rx="1.9" ry="1.1" fill="#d8d8d8"/><circle cx="35.3" cy="136.1" r="0.5" fill="#fff"/><rect x="41.0" y="134.3" width="3.6" height="3.6" fill="#fdfdfd" stroke="#888" stroke-width="0.45"/><path d="M41.9 135.7v1.2h1.2" stroke="#aaa" stroke-width="0.3" fill="none"/><ellipse cx="35.3" cy="143.0" rx="1.9" ry="1.1" fill="#8a8a8a"/><circle cx="35.3" cy="143.0" r="0.5" fill="#fff"/><rect x="41.0" y="141.2" width="3.6" height="3.6" fill="#fdfdfd" stroke="#888" stroke-width="0.45"/><path d="M41.9 142.6v1.2h1.2" stroke="#aaa" stroke-width="0.3" fill="none"/><ellipse cx="35.3" cy="149.9" rx="1.9" ry="1.1" fill="#d8d8d8"/><circle cx="35.3" cy="149.9" r="0.5" fill="#fff"/><rect x="41.0" y="148.1" width="3.6" height="3.6" fill="#fdfdfd" stroke="#888" stroke-width="0.45"/><path d="M41.9 149.5v1.2h1.2" stroke="#aaa" stroke-width="0.3" fill="none"/><ellipse cx="35.3" cy="156.8" rx="1.9" ry="1.1" fill="#8a8a8a"/><circle cx="35.3" cy="156.8" r="0.5" fill="#fff"/><rect x="41.0" y="155.0" width="3.6" height="3.6" fill="#fdfdfd" stroke="#888" stroke-width="0.45"/><path d="M41.9 156.4v1.2h1.2" stroke="#aaa" stroke-width="0.3" fill="none"/><ellipse cx="35.3" cy="163.8" rx="1.9" ry="1.1" fill="#d8d8d8"/><circle cx="35.3" cy="163.8" r="0.5" fill="#fff"/><rect x="41.0" y="162.0" width="3.6" height="3.6" fill="#fdfdfd" stroke="#888" stroke-width="0.45"/><path d="M41.9 163.4v1.2h1.2" stroke="#aaa" stroke-width="0.3" fill="none"/><ellipse cx="35.3" cy="170.7" rx="1.9" ry="1.1" fill="#d8d8d8"/><circle cx="35.3" cy="170.7" r="0.5" fill="#fff"/><rect x="41.0" y="168.9" width="3.6" height="3.6" fill="#fdfdfd" stroke="#888" stroke-width="0.45"/><path d="M41.9 170.3v1.2h1.2" stroke="#aaa" stroke-width="0.3" fill="none"/><ellipse cx="35.3" cy="177.6" rx="1.9" ry="1.1" fill="#8a8a8a"/><circle cx="35.3" cy="177.6" r="0.5" fill="#fff"/><rect x="41.0" y="175.8" width="3.6" height="3.6" fill="#fdfdfd" stroke="#888" stroke-width="0.45"/><path d="M41.9 177.2v1.2h1.2" stroke="#aaa" stroke-width="0.3" fill="none"/><path d="M22.5 183.1l1.9 1.5-1.9 1.5z" fill="none" stroke="#999" stroke-width="0.5"/><ellipse cx="30.0" cy="184.6" rx="1.9" ry="1.1" fill="#d8d8d8"/><circle cx="30.0" cy="184.6" r="0.5" fill="#fff"/><path d="M35.4 182.7h1.6l0.5 0.5h2.5v3.1h-4.6z" fill="#959595"/><ellipse cx="30.0" cy="191.5" rx="1.9" ry="1.1" fill="#d8d8d8"/><circle cx="30.0" cy="191.5" r="0.5" fill="#fff"/><rect x="35.9" y="189.7" width="3.6" height="3.6" fill="#fdfdfd" stroke="#888" stroke-width="0.45"/><path d="M36.8 191.1v1.2h1.2" stroke="#aaa" stroke-width="0.3" fill="none"/><ellipse cx="30.0" cy="198.4" rx="1.9" ry="1.1" fill="#d8d8d8"/><circle cx="30.0" cy="198.4" r="0.5" fill="#fff"/><rect x="35.9" y="196.6" width="3.6" height="3.6" fill="#fdfdfd" stroke="#888" stroke-width="0.45"/><path d="M36.8 198.0v1.2h1.2" stroke="#aaa" stroke-width="0.3" fill="none"/><path d="M16.7 203.9l1.9 1.5-1.9 1.5z" fill="none" stroke="#999" stroke-width="0.5"/><ellipse cx="24.5" cy="205.4" rx="1.9" ry="1.1" fill="#8a8a8a"/><circle cx="24.5" cy="205.4" r="0.5" fill="#fff"/><path d="M29.7 203.5h1.6l0.5 0.5h2.5v3.1h-4.6z" fill="#959595"/><path d="M16.7 210.8l1.9 1.5-1.9 1.5z" fill="none" stroke="#999" stroke-width="0.5"/><ellipse cx="24.5" cy="212.3" rx="1.9" ry="1.1" fill="#8a8a8a"/><circle cx="24.5" cy="212.3" r="0.5" fill="#fff"/><path d="M29.7 210.4h1.6l0.5 0.5h2.5v3.1h-4.6z" fill="#959595"/><path d="M11.5 217.7l1.9 1.5-1.9 1.5z" fill="none" stroke="#999" stroke-width="0.5"/><rect x="17" y="216.7" width="0.7" height="5" fill="#e05555"/><ellipse cx="21.5" cy="219.2" rx="1.9" ry="1.1" fill="#d8d8d8"/><circle cx="21.5" cy="219.2" r="0.5" fill="#fff"/><rect x="26.5" y="217.3" width="3.6" height="3.8" fill="#f8f8f8" stroke="#999" stroke-width="0.45"/><path d="M27.3 218.7h2M27.3 219.8h2" stroke="#bbb" stroke-width="0.3"/><path d="M11.5 224.7l1.9 1.5-1.9 1.5z" fill="none" stroke="#999" stroke-width="0.5"/><rect x="17" y="223.7" width="0.7" height="5" fill="#e05555"/><ellipse cx="21.5" cy="226.2" rx="1.9" ry="1.1" fill="#d8d8d8"/><circle cx="21.5" cy="226.2" r="0.5" fill="#fff"/><rect x="26.5" y="224.2" width="3.6" height="3.8" fill="#f8f8f8" stroke="#999" stroke-width="0.45"/><path d="M27.3 225.7h2M27.3 226.8h2" stroke="#bbb" stroke-width="0.3"/></svg>
<svg class="abs" style="left:700px;top:42px" width="40" height="32" viewBox="700 42 40 32"><path d="M711 51.3l8-1.2 12.3 1.2-8.3 1z" fill="#f4f4f5"/><path d="M711 51.3l12 1v15.5l-12-2.2z" fill="#ececee" stroke="#dcdcdf" stroke-width="0.3"/><path d="M723 52.3l8.3-1v14.2l-8.3 2.3z" fill="#e4e4e7" stroke="#d6d6da" stroke-width="0.3"/><path d="M723 45.4v22.4" stroke="#a4a6ee" stroke-width="0.9"/><path d="M723 67.8l10.6-4.6" stroke="#f0b4b4" stroke-width="0.5"/><path d="M723 67.8l-13-3.4" stroke="#bfe3bf" stroke-width="0.5"/><text x="717" y="60.6" font-size="2.4" fill="#bbb" text-anchor="middle" font-family="Liberation Sans">LEFT</text><text x="727.3" y="60.6" font-size="2.2" fill="#bbb" text-anchor="middle" font-family="Liberation Sans">FRONT</text><text x="723" y="44.8" font-size="2.2" fill="#aab" text-anchor="middle" font-family="Liberation Sans">Z</text></svg>
<div class="abs" style="left:1.3px;top:379.4px;width:86px;height:6.4px;background:#f0f0f0;border:0.4px solid #e8e8e8;box-sizing:border-box;"></div>
<div class="abs" style="left:82.1px;top:381.6px;width:2px;height:2px;border-radius:1px;background:#333;"></div>
<svg class="abs" style="left:335px;top:377px" width="75" height="11" viewBox="335 377 75 11"><circle cx="339.3" cy="382.4" r="1.7" fill="#9a9a9a"/><circle cx="338.9" cy="382" r="0.8" fill="#e6e6e6"/><path d="M342.6 382l0.8 0.8 0.8-0.8z" fill="#aaa"/><rect x="346.8" y="380.6" width="3.6" height="3.6" fill="#b4b4b4"/><path d="M351.2 382l0.7 0.7 0.7-0.7z" fill="#aaa"/><rect x="353.2" y="378.7" width="6.7" height="6.9" fill="#2f86d6"/><path d="M355.2 383.8c0-1.8 0.5-3 1.4-3s1.4 1.2 1.4 3z" fill="#fff"/><circle cx="364.3" cy="381.8" r="1.4" fill="none" stroke="#999" stroke-width="0.6"/><path d="M365.2 383l1.2 1.3" stroke="#999" stroke-width="0.6"/><rect x="369.6" y="380.3" width="3" height="3" fill="none" stroke="#888" stroke-width="0.5"/><path d="M372.4 383.2l1.3 1.3" stroke="#777" stroke-width="0.6"/><path d="M375 382l0.7 0.7 0.7-0.7z" fill="#aaa"/><rect x="378.3" y="380.3" width="4.6" height="3.9" fill="#a9b4c4" stroke="#8d9db3" stroke-width="0.4"/><path d="M383.9 382l0.7 0.7 0.7-0.7z" fill="#aaa"/><rect x="387.3" y="380.3" width="4.6" height="3.9" fill="#b9bcc4" stroke="#8d9db3" stroke-width="0.4"/><path d="M392.9 382l0.7 0.7 0.7-0.7z" fill="#aaa"/><rect x="396.2" y="380.3" width="4.6" height="3.9" fill="#8fa6c8" stroke="#8d9db3" stroke-width="0.4"/><path d="M401.8 382l0.7 0.7 0.7-0.7z" fill="#aaa"/></svg>
<div class="abs" style="left:0;top:387.3px;width:740px;height:14.7px;background:#f2f2f2;"></div>
<svg class="abs" style="left:0;top:388px" width="740" height="14" viewBox="0 388 740 14"><rect x="41.4" y="389.6" width="346.6" height="1.1" fill="#f3a79b"/><path d="M3.6 393v2.8M6.6 393l-2.4 1.4 2.4 1.4z" fill="#555" stroke="#555" stroke-width="0.4"/><path d="M13.2 393l-2.4 1.4 2.4 1.4z" fill="#444"/><path d="M17.6 392.4l3.4 2-3.4 2z" fill="#222"/><path d="M24.8 393l2.4 1.4-2.4 1.4z" fill="#444"/><path d="M34.4 393v2.8M31.4 393l2.4 1.4-2.4 1.4z" fill="#777" stroke="#777" stroke-width="0.4"/><rect x="42.3" y="392.4" width="4" height="4.4" fill="#6f7048"/><rect x="43.8" y="393" width="1" height="3" fill="#d8d8b0"/><rect x="49.0" y="392.4" width="4.4" height="4.4" fill="#e2e2e2" stroke="#c8c8c8" stroke-width="0.3"/><rect x="55.8" y="392.2" width="4.6" height="4.8" rx="0.5" fill="#5aa3e4"/><rect x="57.7" y="393.2" width="2" height="2" fill="#c6e0f7"/><rect x="62.8" y="392.4" width="4.4" height="4.4" fill="#e2e2e2" stroke="#c8c8c8" stroke-width="0.3"/><rect x="69.6" y="392.2" width="4.6" height="4.8" rx="0.5" fill="#5aa3e4"/><rect x="71.5" y="393.2" width="2" height="2" fill="#c6e0f7"/><rect x="76.5" y="392.2" width="4.6" height="4.8" rx="0.5" fill="#5aa3e4"/><rect x="78.4" y="393.2" width="2" height="2" fill="#c6e0f7"/><rect x="82.2" y="391.4" width="7" height="6.2" fill="#e4e21c"/><rect x="84.0" y="392.8" width="3.4" height="3.4" fill="#d3d02a"/><rect x="90.3" y="392.2" width="4.6" height="4.8" rx="0.5" fill="#5aa3e4"/><rect x="92.2" y="393.2" width="2" height="2" fill="#c6e0f7"/><rect x="97.2" y="392.2" width="4.6" height="4.8" rx="0.5" fill="#5aa3e4"/><rect x="99.1" y="393.2" width="2" height="2" fill="#c6e0f7"/><rect x="104.1" y="392.2" width="4.6" height="4.8" rx="0.5" fill="#5aa3e4"/><rect x="106.0" y="393.2" width="2" height="2" fill="#c6e0f7"/><rect x="111.3" y="392.6" width="4" height="4" fill="#fafafa" stroke="#9ab" stroke-width="0.4" stroke-dasharray="0.8 0.6"/><rect x="118.0" y="392.4" width="4.4" height="4.4" fill="#e2e2e2" stroke="#c8c8c8" stroke-width="0.3"/><rect x="124.8" y="392.2" width="4.6" height="4.8" rx="0.5" fill="#5aa3e4"/><rect x="126.7" y="393.2" width="2" height="2" fill="#c6e0f7"/><rect x="131.7" y="392.2" width="4.6" height="4.8" rx="0.5" fill="#5aa3e4"/><rect x="133.6" y="393.2" width="2" height="2" fill="#c6e0f7"/><rect x="138.7" y="392.4" width="4.4" height="4.4" fill="#e2e2e2" stroke="#c8c8c8" stroke-width="0.3"/><rect x="145.5" y="392.2" width="4.6" height="4.8" rx="0.5" fill="#5aa3e4"/><rect x="147.4" y="393.2" width="2" height="2" fill="#c6e0f7"/><rect x="152.4" y="392.2" width="4.6" height="4.8" rx="0.5" fill="#5aa3e4"/><rect x="154.3" y="393.2" width="2" height="2" fill="#c6e0f7"/><rect x="159.3" y="392.2" width="4.6" height="4.8" rx="0.5" fill="#5aa3e4"/><rect x="161.2" y="393.2" width="2" height="2" fill="#c6e0f7"/><rect x="166.2" y="392.2" width="4.6" height="4.8" rx="0.5" fill="#5aa3e4"/><rect x="168.1" y="393.2" width="2" height="2" fill="#c6e0f7"/><rect x="173.2" y="392.4" width="4.4" height="4.4" fill="#e2e2e2" stroke="#c8c8c8" stroke-width="0.3"/><rect x="180.0" y="392.2" width="4.6" height="4.8" rx="0.5" fill="#5aa3e4"/><rect x="181.9" y="393.2" width="2" height="2" fill="#c6e0f7"/><rect x="186.9" y="392.2" width="4.6" height="4.8" rx="0.5" fill="#5aa3e4"/><rect x="188.8" y="393.2" width="2" height="2" fill="#c6e0f7"/><rect x="193.9" y="392.4" width="4.4" height="4.4" fill="#e2e2e2" stroke="#c8c8c8" stroke-width="0.3"/><rect x="200.8" y="392.4" width="4.4" height="4.4" fill="#9a9a9a"/><circle cx="209.9" cy="394.6" r="2" fill="#e9e9e9" stroke="#999" stroke-width="0.5"/><path d="M209.7 394.6h1.4" stroke="#777" stroke-width="0.4"/><circle cx="216.8" cy="394.6" r="2" fill="#e9e9e9" stroke="#999" stroke-width="0.5"/><path d="M216.6 394.6h1.4" stroke="#777" stroke-width="0.4"/><circle cx="223.7" cy="394.6" r="2" fill="#e9e9e9" stroke="#999" stroke-width="0.5"/><path d="M223.5 394.6h1.4" stroke="#777" stroke-width="0.4"/><circle cx="230.6" cy="394.6" r="2" fill="#e9e9e9" stroke="#999" stroke-width="0.5"/><path d="M230.4 394.6h1.4" stroke="#777" stroke-width="0.4"/><rect x="235.3" y="392.4" width="4.4" height="4.4" fill="#e2e2e2" stroke="#c8c8c8" stroke-width="0.3"/><rect x="242.1" y="392.2" width="4.6" height="4.8" rx="0.5" fill="#5aa3e4"/><rect x="244.0" y="393.2" width="2" height="2" fill="#c6e0f7"/><rect x="249.1" y="392.4" width="4.4" height="4.4" fill="#e2e2e2" stroke="#c8c8c8" stroke-width="0.3"/><rect x="255.9" y="392.2" width="4.6" height="4.8" rx="0.5" fill="#5aa3e4"/><rect x="257.8" y="393.2" width="2" height="2" fill="#c6e0f7"/><circle cx="265.1" cy="394.6" r="2" fill="#e9e9e9" stroke="#999" stroke-width="0.5"/><path d="M264.9 394.6h1.4" stroke="#777" stroke-width="0.4"/><rect x="269.8" y="392.4" width="4.4" height="4.4" fill="#e2e2e2" stroke="#c8c8c8" stroke-width="0.3"/><rect x="276.6" y="392.2" width="4.6" height="4.8" rx="0.5" fill="#5aa3e4"/><rect x="278.5" y="393.2" width="2" height="2" fill="#c6e0f7"/><rect x="283.5" y="392.2" width="4.6" height="4.8" rx="0.5" fill="#5aa3e4"/><rect x="285.4" y="393.2" width="2" height="2" fill="#c6e0f7"/><rect x="290.4" y="392.2" width="4.6" height="4.8" rx="0.5" fill="#5aa3e4"/><rect x="292.3" y="393.2" width="2" height="2" fill="#c6e0f7"/><rect x="297.3" y="392.2" width="4.6" height="4.8" rx="0.5" fill="#5aa3e4"/><rect x="299.2" y="393.2" width="2" height="2" fill="#c6e0f7"/><rect x="304.2" y="392.2" width="4.6" height="4.8" rx="0.5" fill="#5aa3e4"/><rect x="306.1" y="393.2" width="2" height="2" fill="#c6e0f7"/><circle cx="313.4" cy="394.6" r="2" fill="#e9e9e9" stroke="#999" stroke-width="0.5"/><path d="M313.2 394.6h1.4" stroke="#777" stroke-width="0.4"/><circle cx="320.3" cy="394.6" r="2" fill="#e9e9e9" stroke="#999" stroke-width="0.5"/><path d="M320.1 394.6h1.4" stroke="#777" stroke-width="0.4"/><circle cx="327.2" cy="394.6" r="2" fill="#e9e9e9" stroke="#999" stroke-width="0.5"/><path d="M327.0 394.6h1.4" stroke="#777" stroke-width="0.4"/><circle cx="334.1" cy="394.6" r="2" fill="#e9e9e9" stroke="#999" stroke-width="0.5"/><path d="M333.9 394.6h1.4" stroke="#777" stroke-width="0.4"/><circle cx="341.0" cy="394.6" r="2" fill="#e9e9e9" stroke="#999" stroke-width="0.5"/><path d="M340.8 394.6h1.4" stroke="#777" stroke-width="0.4"/><circle cx="347.9" cy="394.6" r="2" fill="#e9e9e9" stroke="#999" stroke-width="0.5"/><path d="M347.7 394.6h1.4" stroke="#777" stroke-width="0.4"/><circle cx="354.8" cy="394.6" r="2" fill="#e9e9e9" stroke="#999" stroke-width="0.5"/><path d="M354.6 394.6h1.4" stroke="#777" stroke-width="0.4"/><circle cx="361.7" cy="394.6" r="2" fill="#e9e9e9" stroke="#999" stroke-width="0.5"/><path d="M361.5 394.6h1.4" stroke="#777" stroke-width="0.4"/><circle cx="368.6" cy="394.6" r="2" fill="#e9e9e9" stroke="#999" stroke-width="0.5"/><path d="M368.4 394.6h1.4" stroke="#777" stroke-width="0.4"/><path d="M375.5 392.4v4.4M373.3 394.6h4.4" stroke="#444" stroke-width="0.6"/><path d="M382.4 392.4v4.4M380.2 394.6h4.4" stroke="#444" stroke-width="0.6"/><path d="M386 389.6h3.2l-1.6 2z" fill="#222"/><path d="M387.6 391v9" stroke="#444" stroke-width="0.5"/></svg>
<svg class="abs" style="left:0;top:0" width="740" height="402" viewBox="0 0 740 402" font-family="Liberation Sans, sans-serif"><rect x="28.0" y="50.4" width="58.0" height="5" fill="#f3f3f3"/><rect x="23.5" y="57.3" width="29.0" height="5" fill="#f3f3f3"/><rect x="24.5" y="64.3" width="22.0" height="5" fill="#f3f3f3"/><rect x="24.5" y="71.2" width="23.0" height="5" fill="#f3f3f3"/><rect x="32.5" y="78.1" width="11.0" height="5" fill="#f3f3f3"/><rect x="32.5" y="85.0" width="14.5" height="5" fill="#f3f3f3"/><rect x="32.5" y="92.0" width="20.5" height="5" fill="#f3f3f3"/><rect x="33.5" y="98.9" width="49.0" height="5" fill="#f3f3f3"/><rect x="25.3" y="105.6" width="55" height="5.4" fill="#686868"/><rect x="26" y="106.5" width="3.2" height="3.6" fill="#f4f4f4"/><rect x="37.5" y="112.8" width="11.0" height="5" fill="#f3f3f3"/><rect x="37.5" y="119.7" width="12.0" height="5" fill="#f3f3f3"/><rect x="42.5" y="126.6" width="21.0" height="5" fill="#f3f3f3"/><rect x="49.0" y="133.6" width="16.5" height="5" fill="#f3f3f3"/><rect x="49.0" y="140.5" width="16.5" height="5" fill="#f3f3f3"/><rect x="49.0" y="147.4" width="16.5" height="5" fill="#f3f3f3"/><rect x="49.0" y="154.3" width="16.5" height="5" fill="#f3f3f3"/><rect x="49.0" y="161.3" width="16.5" height="5" fill="#f3f3f3"/><rect x="49.0" y="168.2" width="16.5" height="5" fill="#f3f3f3"/><rect x="49.0" y="175.1" width="15.0" height="5" fill="#f3f3f3"/><rect x="43.0" y="182.1" width="21.0" height="5" fill="#f3f3f3"/><rect x="43.0" y="189.0" width="18.0" height="5" fill="#f3f3f3"/><rect x="43.0" y="195.9" width="27.0" height="5" fill="#f3f3f3"/><rect x="37.5" y="202.9" width="15.5" height="5" fill="#f3f3f3"/><rect x="37.5" y="209.8" width="20.5" height="5" fill="#f3f3f3"/><rect x="33.5" y="216.7" width="45.0" height="5" fill="#f3f3f3"/><rect x="33.5" y="223.7" width="43.0" height="5" fill="#f3f3f3"/><text x="7.5" y="3.95" font-size="3.2" fill="#8f8f8f" textLength="191.5" lengthAdjust="spacingAndGlyphs">al_4frmH_3ins_8H_8wall_food_delivery_system v95* [TrishhayMyndsphere] - Autodesk Fusion Personal (Not for Commercial Use)</text><text x="328.4" y="13.19" font-size="3.3" fill="#6e6e6e" textLength="81.5" lengthAdjust="spacingAndGlyphs">al_4frmH_3ins_8H_8wall_food_delivery_system v95*</text><text x="413.5" y="13.22" font-size="3.4" fill="#c8c8c8">×</text><text x="43.8" y="20.02" font-size="3.1" fill="#3a92dc" textLength="10.2" lengthAdjust="spacingAndGlyphs">SOLID</text><text x="65.6" y="20.02" font-size="3.1" fill="#888" textLength="14.8" lengthAdjust="spacingAndGlyphs">SURFACE</text><text x="93.6" y="20.02" font-size="3.1" fill="#888" textLength="8.9" lengthAdjust="spacingAndGlyphs">MESH</text><text x="116.6" y="20.02" font-size="3.1" fill="#888" textLength="21.9" lengthAdjust="spacingAndGlyphs">SHEET METAL</text><text x="151.6" y="20.02" font-size="3.1" fill="#888" textLength="13.9" lengthAdjust="spacingAndGlyphs">PLASTIC</text><text x="177.6" y="20.02" font-size="3.1" fill="#888" textLength="16.9" lengthAdjust="spacingAndGlyphs">UTILITIES</text><text x="207.6" y="20.02" font-size="3.1" fill="#888" textLength="13.9" lengthAdjust="spacingAndGlyphs">MANAGE</text><text x="11.5" y="28.59" font-size="3.3" fill="#666" textLength="16.5" lengthAdjust="spacingAndGlyphs">DESIGN ▾</text><text x="80.0" y="36.82" font-size="3.1" fill="#777" textLength="14.5" lengthAdjust="spacingAndGlyphs">CREATE ▾</text><text x="175.5" y="36.82" font-size="3.1" fill="#777" textLength="14.5" lengthAdjust="spacingAndGlyphs">MODIFY ▾</text><text x="240.5" y="36.82" font-size="3.1" fill="#777" textLength="18.5" lengthAdjust="spacingAndGlyphs">ASSEMBLE ▾</text><text x="274.0" y="36.82" font-size="3.1" fill="#777" textLength="22.0" lengthAdjust="spacingAndGlyphs">CONFIGURE ▾</text><text x="304.0" y="36.82" font-size="3.1" fill="#777" textLength="22.0" lengthAdjust="spacingAndGlyphs">CONSTRUCT ▾</text><text x="335.0" y="36.82" font-size="3.1" fill="#777" textLength="16.5" lengthAdjust="spacingAndGlyphs">INSPECT ▾</text><text x="370.5" y="36.82" font-size="3.1" fill="#777" textLength="14.0" lengthAdjust="spacingAndGlyphs">INSERT ▾</text><text x="402.5" y="36.82" font-size="3.1" fill="#777" textLength="15.0" lengthAdjust="spacingAndGlyphs">SELECT ▾</text><text x="8.2" y="45.98" font-size="3.0" fill="#888" textLength="16.0" lengthAdjust="spacingAndGlyphs">BROWSER</text><text x="29.0" y="54.05" font-size="3.2" fill="#8c8c8c" textLength="56.0" lengthAdjust="spacingAndGlyphs">al_4frmH_3ins_8H_8wall_food_deliv...</text><text x="24.5" y="60.98" font-size="3.2" fill="#8c8c8c" textLength="27.0" lengthAdjust="spacingAndGlyphs">Document Settings</text><text x="25.5" y="67.91" font-size="3.2" fill="#8c8c8c" textLength="20.0" lengthAdjust="spacingAndGlyphs">Named Views</text><text x="25.5" y="74.84" font-size="3.2" fill="#8c8c8c" textLength="21.0" lengthAdjust="spacingAndGlyphs">Selection Sets</text><text x="33.5" y="81.77" font-size="3.2" fill="#8c8c8c" textLength="9.0" lengthAdjust="spacingAndGlyphs">Origin</text><text x="33.5" y="88.70" font-size="3.2" fill="#8c8c8c" textLength="12.5" lengthAdjust="spacingAndGlyphs">Analysis</text><text x="33.5" y="95.63" font-size="3.2" fill="#8c8c8c" textLength="18.5" lengthAdjust="spacingAndGlyphs">Construction</text><text x="34.5" y="102.56" font-size="3.2" fill="#8c8c8c" textLength="47.0" lengthAdjust="spacingAndGlyphs">E-Bot_Food_Delivery_Mechanism...</text><text x="32.0" y="109.49" font-size="3.2" fill="#f4f4f4" font-weight="bold" textLength="46.0" lengthAdjust="spacingAndGlyphs">Snar_Frag_to_8wall_Spe...</text><text x="38.5" y="116.42" font-size="3.2" fill="#8c8c8c" textLength="9.0" lengthAdjust="spacingAndGlyphs">Origin</text><text x="38.5" y="123.35" font-size="3.2" fill="#8c8c8c" textLength="10.0" lengthAdjust="spacingAndGlyphs">Bodies</text><text x="43.5" y="130.28" font-size="3.2" fill="#8c8c8c" textLength="19.0" lengthAdjust="spacingAndGlyphs">april_tags (7)</text><text x="50.0" y="137.21" font-size="3.2" fill="#8c8c8c" textLength="14.5" lengthAdjust="spacingAndGlyphs">AprilTag_1</text><text x="50.0" y="144.14" font-size="3.2" fill="#8c8c8c" textLength="14.5" lengthAdjust="spacingAndGlyphs">AprilTag_2</text><text x="50.0" y="151.07" font-size="3.2" fill="#8c8c8c" textLength="14.5" lengthAdjust="spacingAndGlyphs">AprilTag_3</text><text x="50.0" y="158.00" font-size="3.2" fill="#8c8c8c" textLength="14.5" lengthAdjust="spacingAndGlyphs">AprilTag_4</text><text x="50.0" y="164.93" font-size="3.2" fill="#8c8c8c" textLength="14.5" lengthAdjust="spacingAndGlyphs">AprilTag_5</text><text x="50.0" y="171.86" font-size="3.2" fill="#8c8c8c" textLength="14.5" lengthAdjust="spacingAndGlyphs">AprilTag_6</text><text x="50.0" y="178.79" font-size="3.2" fill="#8c8c8c" textLength="13.0" lengthAdjust="spacingAndGlyphs">Tag_Slide</text><text x="44.0" y="185.72" font-size="3.2" fill="#8c8c8c" textLength="19.0" lengthAdjust="spacingAndGlyphs">Snar_8mm (5)</text><text x="44.0" y="192.65" font-size="3.2" fill="#8c8c8c" textLength="16.0" lengthAdjust="spacingAndGlyphs">carrier_end</text><text x="44.0" y="199.58" font-size="3.2" fill="#8c8c8c" textLength="25.0" lengthAdjust="spacingAndGlyphs">main_snar_sketch</text><text x="38.5" y="206.51" font-size="3.2" fill="#8c8c8c" textLength="13.5" lengthAdjust="spacingAndGlyphs">Sketches</text><text x="38.5" y="213.44" font-size="3.2" fill="#8c8c8c" textLength="18.5" lengthAdjust="spacingAndGlyphs">Construction</text><text x="34.5" y="220.37" font-size="3.2" fill="#8c8c8c" textLength="43.0" lengthAdjust="spacingAndGlyphs">Scook_Container_End_Point:1</text><text x="34.5" y="227.30" font-size="3.2" fill="#8c8c8c" textLength="41.0" lengthAdjust="spacingAndGlyphs">Scook_Main_Control_Panel:1</text><text x="8.2" y="383.78" font-size="3.0" fill="#888" textLength="19.0" lengthAdjust="spacingAndGlyphs">COMMENTS</text></svg>
<!--UI-END-->
</body>
</html>
